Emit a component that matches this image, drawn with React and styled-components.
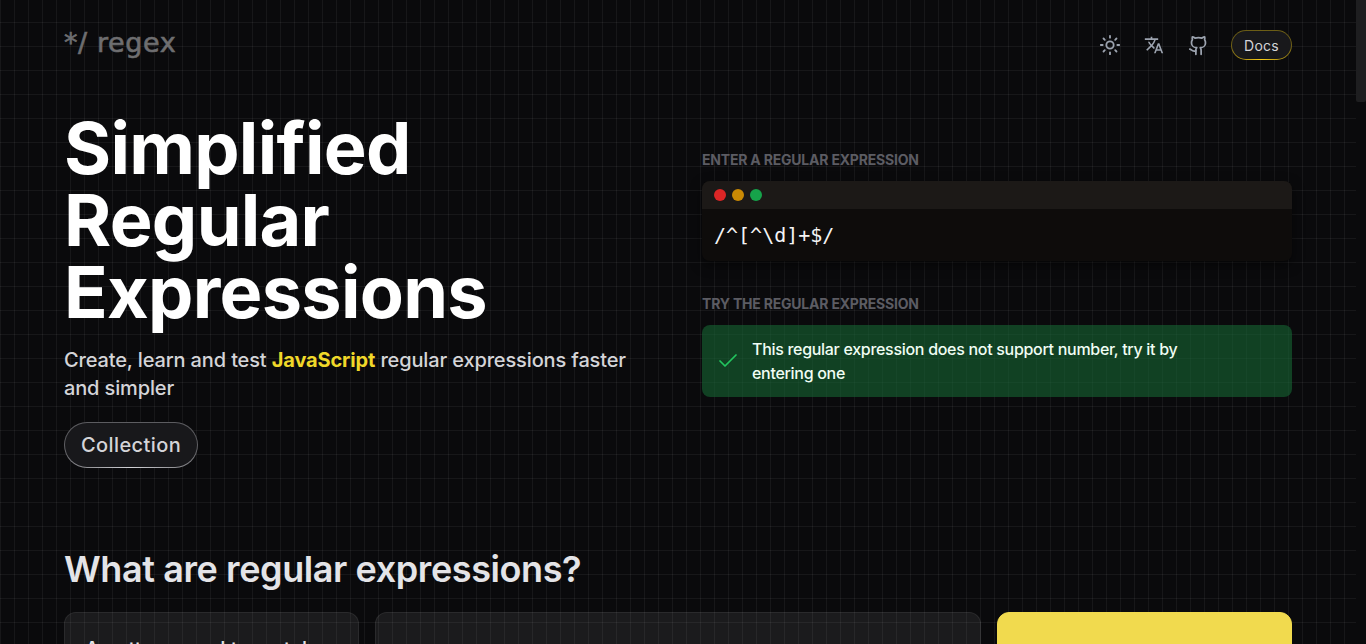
import React from "react";
import styled, { createGlobalStyle } from "styled-components";
import { Sun, Github, Check } from "lucide-react";
import { MdTranslate } from "react-icons/md";

const GlobalStyle = createGlobalStyle`
  html, body {
    margin: 0;
    height: 100%;
    overflow: hidden;
    background: #0a0a0c;
  }
  * {
    box-sizing: border-box;
  }
`;

const Shell = styled.div`
  display: flex;
  height: 100vh;
  overflow: hidden;
  font-family: "Inter", "Liberation Sans", sans-serif;
`;

const Page = styled.div`
  flex: 1;
  min-width: 0;
  padding: 30px 64px 0;
  background-color: #0a0a0c;
  background-image: linear-gradient(to right, rgba(255, 255, 255, 0.055) 1px, transparent 1px),
    linear-gradient(to bottom, rgba(255, 255, 255, 0.055) 1px, transparent 1px);
  background-size: 14px 24px;
  background-position: 0 22px;
`;

const ScrollTrack = styled.div`
  flex: none;
  width: 10px;
  background: #0a0a0c;
`;

const ScrollThumb = styled.div`
  height: 102px;
  border-radius: 0 0 2px 2px;
  background: #1e1e20;
`;

const Nav = styled.nav`
  display: flex;
  justify-content: space-between;
  align-items: center;
  height: 30px;
`;

const Logo = styled.a`
  font-family: "DejaVu Sans", sans-serif;
  font-size: 27px;
  line-height: 28px;
  letter-spacing: 0.6px;
  -webkit-text-stroke: 0.6px #6e6e70;
  color: #6e6e70;
  margin-top: -4px;
`;

const NavActions = styled.div`
  display: flex;
  align-items: center;
  gap: 22px;
  color: #9ca3af;
`;

const IconButton = styled.button`
  display: flex;
  align-items: center;
  justify-content: center;
  width: 22px;
  height: 22px;
  padding: 0;
  border: 0;
  background: none;
  color: inherit;
  svg {
    flex: none;
  }
`;

const PillButton = styled.button`
  border: 1px solid transparent;
  border-radius: 999px;
  height: ${(props) => (props.large ? "46px" : "30px")};
  padding: ${(props) => (props.large ? "0 16px" : "0 12px")};
  font-family: inherit;
  font-size: ${(props) => (props.large ? "20px" : "14px")};
  letter-spacing: ${(props) => (props.large ? "0.4px" : "0.25px")};
  font-weight: ${(props) => (props.large ? 500 : 400)};
  color: #d4d4d8;
  background: linear-gradient(#18181b, #18181b) padding-box,
    ${(props) =>
      props.large
        ? "radial-gradient(60% 100% at 50% 100%, #d4d4d8, #5c5c60)"
        : "radial-gradient(60% 100% at 50% 100%, #facc15, #6b5d16)"}
      border-box;
`;

const Hero = styled.section`
  display: grid;
  grid-template-columns: 1fr 1fr;
  gap: 48px;
  margin-top: 52px;
`;

const Title = styled.h1`
  margin: 0;
  font-size: 72px;
  line-height: 72px;
  font-weight: 700;
  letter-spacing: -0.01em;
  color: #fff;
`;

const Subtitle = styled.p`
  margin: 18px 0 20px;
  font-size: 20px;
  line-height: 28px;
  font-weight: 500;
  letter-spacing: -0.14px;
  color: #d4d4d8;
`;

const Highlight = styled.strong`
  font-weight: 700;
  color: #f0d829;
`;

const Tester = styled.div`
  padding-top: 38px;
`;

const Label = styled.div`
  font-size: 14px;
  line-height: 20px;
  font-weight: 700;
  letter-spacing: -0.2px;
  color: #5c5c63;
  margin-top: ${(props) => props.$offset || 0}px;
  margin-bottom: 11px;
  text-transform: uppercase;
`;

const CodeWindow = styled.div`
  border-radius: 8px;
  overflow: hidden;
  background: #0e0c0b;
  box-shadow: 0 4px 12px rgba(0, 0, 0, 0.5);
`;

const WindowBar = styled.div`
  display: flex;
  align-items: center;
  gap: 6px;
  height: 28px;
  padding: 0 12px;
  background: #1c1917;
`;

const Dot = styled.span`
  width: 12px;
  height: 12px;
  border-radius: 50%;
  background: ${(props) => props.color};
`;

const Expression = styled.div`
  height: 52px;
  padding: 0 12px;
  display: flex;
  align-items: center;
  font-family: "DejaVu Sans Mono", monospace;
  font-size: 20px;
  color: #f4f4f5;
`;

const Alert = styled.div`
  display: flex;
  align-items: center;
  gap: 12px;
  height: 72px;
  padding: 0 60px 0 14px;
  border-radius: 8px;
  background: rgba(22, 101, 52, 0.6);
  font-size: 16px;
  line-height: 24px;
  font-weight: 500;
  letter-spacing: -0.3px;
  color: #f0fdf4;
  svg {
    flex: none;
    color: #22c55e;
  }
`;

const SectionTitle = styled.h2`
  margin: 81px 0 0;
  font-size: 36px;
  line-height: 40px;
  font-weight: 600;
  letter-spacing: -0.41px;
  color: #e4e4e7;
`;

const Cards = styled.div`
  display: grid;
  grid-template-columns: repeat(4, 1fr);
  gap: 16px;
  margin-top: 23px;
`;

const Card = styled.div`
  grid-column: span ${(props) => props.span || 1};
  height: 320px;
  padding: 22px 20px;
  border-radius: 12px;
  border: 1px solid ${(props) => (props.yellow ? "#f1da4e" : "rgba(255, 255, 255, 0.07)")};
  background: ${(props) => (props.yellow ? "#f1da4e" : "rgba(255, 255, 255, 0.07)")};
  font-size: 20px;
  line-height: 28px;
  font-weight: 500;
  color: #e4e4e7;
`;

const App = () => {
  return (
    <Shell>
      <GlobalStyle />
      <Page>
        <Nav>
          <Logo>*/ regex</Logo>
          <NavActions>
            <IconButton><Sun size={22} strokeWidth={2} /></IconButton>
            <IconButton><MdTranslate size={20} /></IconButton>
            <IconButton><Github size={21} strokeWidth={2} /></IconButton>
            <PillButton>Docs</PillButton>
          </NavActions>
        </Nav>
        <Hero>
          <div>
            <Title>Simplified Regular Expressions</Title>
            <Subtitle>
              Create, learn and test <Highlight>JavaScript</Highlight> regular expressions faster and simpler
            </Subtitle>
            <PillButton large>Collection</PillButton>
          </div>
          <Tester>
            <Label>Enter a regular expression</Label>
            <CodeWindow>
              <WindowBar>
                <Dot color="#dc2626" />
                <Dot color="#ca8a04" />
                <Dot color="#16a34a" />
              </WindowBar>
              <Expression>/^[^\d]+$/</Expression>
            </CodeWindow>
            <Label $offset={33}>Try the regular expression</Label>
            <Alert>
              <Check size={24} strokeWidth={1.75} />
              This regular expression does not support number, try it by entering one
            </Alert>
          </Tester>
        </Hero>
        <SectionTitle>What are regular expressions?</SectionTitle>
        <Cards>
          <Card>A pattern used to match</Card>
          <Card span={2} />
          <Card yellow />
        </Cards>
      </Page>
      <ScrollTrack>
        <ScrollThumb />
      </ScrollTrack>
    </Shell>
  );
};

export default App;
